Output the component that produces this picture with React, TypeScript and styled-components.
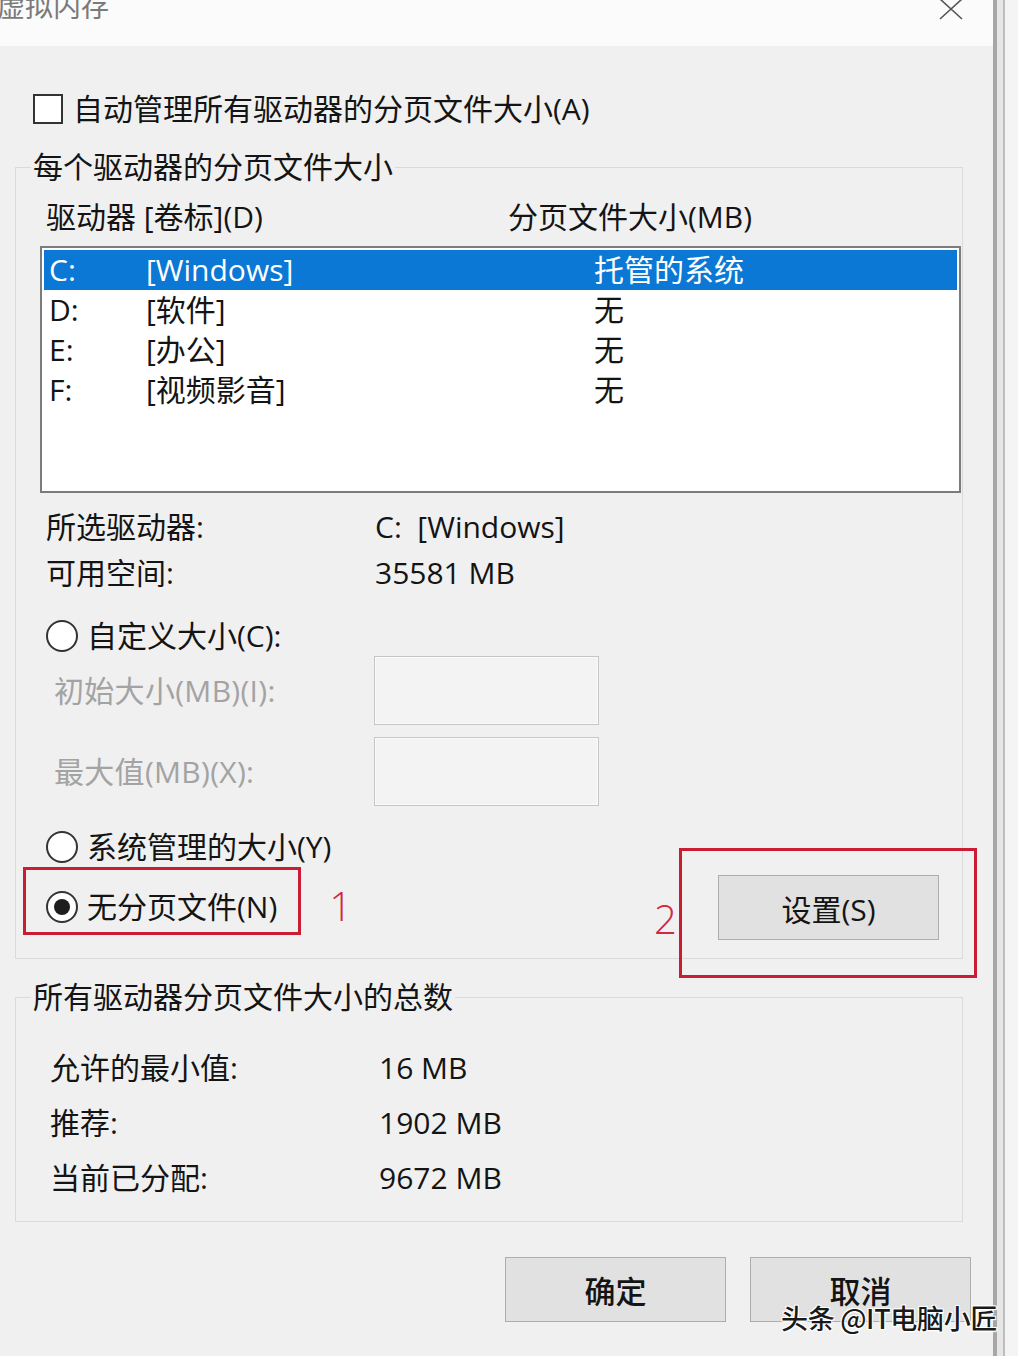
import React from "react";
import styled, { createGlobalStyle } from "styled-components";

const Global = createGlobalStyle`
  html, body { margin: 0; padding: 0; background: #f0f0f0; }
  body { font-family: "Open Sans", "Noto Sans CJK SC", sans-serif; color: #141414; }
  * { box-sizing: border-box; }
`;

const Page = styled.div`
  position: relative;
  width: 1018px;
  height: 1356px;
  overflow: hidden;
  display: flex;
  background: #f0f0f0;
`;

const Dialog = styled.div`
  width: 997px;
  flex: none;
  display: flex;
  flex-direction: column;
  border-right: 4px solid #a7a7a7;
  background: #f0f0f0;
`;

const SideStrip = styled.div`
  flex: 1;
  background: linear-gradient(to right, #e6e6e6 0 6px, #bdbdbd 6px 8px, #f4f4f4 8px);
`;

const TitleBar = styled.div`
  height: 46px;
  flex: none;
  display: flex;
  justify-content: space-between;
  align-items: flex-start;
  padding-right: 30px;
  background: #fbfbfb;
`;

const Title = styled.div`
  font-size: 28px;
  line-height: 28px;
  margin-top: -8px;
  margin-left: -3px;
  color: #7a7a7a;
`;

const Body = styled.div`
  display: flex;
  flex-direction: column;
  padding: 0 30px 0 15px;
`;

const CheckRow = styled.label`
  display: flex;
  align-items: center;
  gap: 10px;
  height: 36px;
  margin-top: 45px;
  padding-left: 18px;
  font-size: 30px;
  line-height: 36px;
`;

const CheckBox = styled.span`
  width: 30px;
  height: 30px;
  flex: none;
  border: 2px solid #333;
  background: #fff;
`;

const Group = styled.fieldset<{ $top: number }>`
  margin: ${(p) => p.$top}px 0 0;
  padding: 0;
  min-width: 0;
  border: 1px solid #dadada;
`;

const Legend = styled.legend`
  margin-left: 15px;
  padding: 0 2px;
  font-size: 30px;
  line-height: 36px;
`;

const Header = styled.div`
  display: grid;
  grid-template-columns: 462px 1fr;
  padding-left: 30px;
  margin-top: 14px;
  font-size: 30px;
  line-height: 36px;
`;

const ListBox = styled.div`
  margin: 11px 1px 0 24px;
  height: 247px;
  border: 2px solid #7c7c7c;
  background: #fff;
  padding: 2px;
`;

const ListRow = styled.div<{ $selected?: boolean }>`
  display: grid;
  grid-template-columns: 97px 448px 1fr;
  height: 40px;
  align-items: center;
  padding-left: 5px;
  font-size: 30px;
  line-height: 40px;
  background: ${(p) => (p.$selected ? "#0a78d4" : "transparent")};
  color: ${(p) => (p.$selected ? "#ffffff" : "#141414")};
`;

const InfoGrid = styled.div<{ $pad: string; $left: number }>`
  display: grid;
  grid-template-columns: 329px 1fr;
  grid-auto-rows: ${(p) => p.$pad};
  align-items: center;
  padding-left: ${(p) => p.$left}px;
  font-size: 30px;
  line-height: 36px;
`;

const InfoWrap = styled.div`
  margin-top: 11px;
`;

const TotalsWrap = styled.div`
  padding: 25px 0 16px 0;
`;

const RadioRow = styled.div<{ $ml?: number; $mt?: number }>`
  display: flex;
  align-items: center;
  gap: 9px;
  height: 36px;
  margin-left: ${(p) => p.$ml ?? 0}px;
  margin-top: ${(p) => p.$mt ?? 0}px;
  font-size: 30px;
  line-height: 36px;
  white-space: nowrap;
`;

const RadioCircle = styled.span<{ $checked?: boolean }>`
  width: 32px;
  height: 32px;
  flex: none;
  border-radius: 50%;
  border: 2px solid #333;
  background: #fff;
  display: flex;
  align-items: center;
  justify-content: center;
  &::after {
    content: "";
    width: 16px;
    height: 16px;
    border-radius: 50%;
    background: ${(p) => (p.$checked ? "#1e1e1e" : "transparent")};
  }
`;

const InputRow = styled.div<{ $mt: number }>`
  display: grid;
  grid-template-columns: 320px 225px;
  align-items: center;
  padding-left: 38px;
  margin-top: ${(p) => p.$mt}px;
  height: 69px;
`;

const DisabledLabel = styled.span`
  font-size: 30px;
  line-height: 36px;
  color: #a3a3a3;
  letter-spacing: 0.3px;
`;

const InputBox = styled.div`
  height: 69px;
  border: 1px solid #c6c6c6;
  background: #f3f3f3;
  box-shadow: inset 0 0 0 1px #fafafa;
`;

const BottomArea = styled.div`
  display: flex;
  justify-content: space-between;
  align-items: flex-start;
  margin-top: 23px;
  padding-bottom: 18px;
`;

const LeftColumn = styled.div`
  display: flex;
  flex-direction: column;
`;

const AnnoRow = styled.div`
  display: flex;
  align-items: center;
  margin-top: 2px;
`;

const AnnoBox = styled.div`
  margin-left: 7px;
  border: 3px solid #c81d33;
  padding: 19px 21px 7px 20px;
`;

const AnnoNum = styled.span`
  color: #d2283e;
  font-size: 40px;
  line-height: 40px;
  font-weight: 300;
  margin-left: 28px;
  margin-top: 10px;
`;

const ButtonWrap = styled.div`
  position: relative;
  margin-top: 46px;
  margin-right: 23px;
`;

const DialogButton = styled.button`
  width: 221px;
  height: 65px;
  border: 1px solid #adadad;
  background: #e1e1e1;
  font-family: "Open Sans", "Noto Sans CJK SC", sans-serif;
  font-size: 30px;
  color: #141414;
  padding: 0;
  display: flex;
  align-items: center;
  justify-content: center;
`;

const RedFrame = styled.div`
  position: absolute;
  left: -39px;
  top: -27px;
  width: 298px;
  height: 130px;
  border: 3px solid #c81d33;
`;

const RedNum = styled.span`
  position: absolute;
  left: -64px;
  top: 24px;
  color: #d2283e;
  font-size: 40px;
  line-height: 40px;
  font-weight: 300;
`;

const Footer = styled.div`
  display: flex;
  justify-content: flex-end;
  gap: 24px;
  margin: 35px -8px 0 0;
`;

const FooterButton = styled(DialogButton)`
  font-size: 31px;
  font-weight: 500;
`;

const Watermark = styled.div`
  position: absolute;
  left: 781px;
  top: 1301px;
  font-family: "Noto Sans CJK SC", sans-serif;
  font-size: 27px;
  line-height: 34px;
  font-weight: 500;
  color: #1a1a1a;
  white-space: nowrap;
  letter-spacing: -0.3px;
  text-shadow: 1px 1px 0 #fff, -1px -1px 0 #fff, 1px -1px 0 #fff, -1px 1px 0 #fff, 0 1px 2px #fff;
`;

const CloseIcon = () => (
  <svg width="24" height="21" viewBox="0 0 24 21" style={{ marginTop: -1 }}>
    <path d="M1 0 L23 20 M23 0 L1 20" stroke="#555" strokeWidth="1.6" fill="none" />
  </svg>
);

const drives = [
  { d: "C:", label: "[Windows]", size: "托管的系统", selected: true },
  { d: "D:", label: "[软件]", size: "无" },
  { d: "E:", label: "[办公]", size: "无" },
  { d: "F:", label: "[视频影音]", size: "无" },
];

export default function App() {
  return (
    <>
      <Global />
      <Page>
        <Dialog>
          <TitleBar>
            <Title>虚拟内存</Title>
            <CloseIcon />
          </TitleBar>
          <Body>
            <CheckRow>
              <CheckBox />
              <span>自动管理所有驱动器的分页文件大小(A)</span>
            </CheckRow>

            <Group $top={22}>
              <Legend>每个驱动器的分页文件大小</Legend>
              <Header>
                <span>驱动器 [卷标](D)</span>
                <span>分页文件大小(MB)</span>
              </Header>
              <ListBox>
                {drives.map((r) => (
                  <ListRow key={r.d} $selected={r.selected}>
                    <span>{r.d}</span>
                    <span>{r.label}</span>
                    <span>{r.size}</span>
                  </ListRow>
                ))}
              </ListBox>
              <InfoWrap>
                <InfoGrid $pad="46px" $left={30}>
                  <span>所选驱动器:</span>
                  <span>C:&nbsp;&nbsp;[Windows]</span>
                  <span>可用空间:</span>
                  <span>35581 MB</span>
                </InfoGrid>
              </InfoWrap>
              <RadioRow $ml={30} $mt={22}>
                <RadioCircle />
                <span>自定义大小(C):</span>
              </RadioRow>
              <InputRow $mt={2}>
                <DisabledLabel>初始大小(MB)(I):</DisabledLabel>
                <InputBox />
              </InputRow>
              <InputRow $mt={12}>
                <DisabledLabel>最大值(MB)(X):</DisabledLabel>
                <InputBox />
              </InputRow>
              <BottomArea>
                <LeftColumn>
                  <RadioRow $ml={30}>
                    <RadioCircle />
                    <span>系统管理的大小(Y)</span>
                  </RadioRow>
                  <AnnoRow>
                    <AnnoBox>
                      <RadioRow>
                        <RadioCircle $checked />
                        <span>无分页文件(N)</span>
                      </RadioRow>
                    </AnnoBox>
                    <AnnoNum>1</AnnoNum>
                  </AnnoRow>
                </LeftColumn>
                <ButtonWrap>
                  <DialogButton>设置(S)</DialogButton>
                  <RedFrame />
                  <RedNum>2</RedNum>
                </ButtonWrap>
              </BottomArea>
            </Group>

            <Group $top={20}>
              <Legend>所有驱动器分页文件大小的总数</Legend>
              <TotalsWrap>
                <InfoGrid $pad="55px" $left={34}>
                  <span>允许的最小值:</span>
                  <span>16 MB</span>
                  <span>推荐:</span>
                  <span>1902 MB</span>
                  <span>当前已分配:</span>
                  <span>9672 MB</span>
                </InfoGrid>
              </TotalsWrap>
            </Group>

            <Footer>
              <FooterButton>确定</FooterButton>
              <FooterButton>取消</FooterButton>
            </Footer>
          </Body>
        </Dialog>
        <SideStrip />
        <Watermark>头条 @IT电脑小匠</Watermark>
      </Page>
    </>
  );
}
